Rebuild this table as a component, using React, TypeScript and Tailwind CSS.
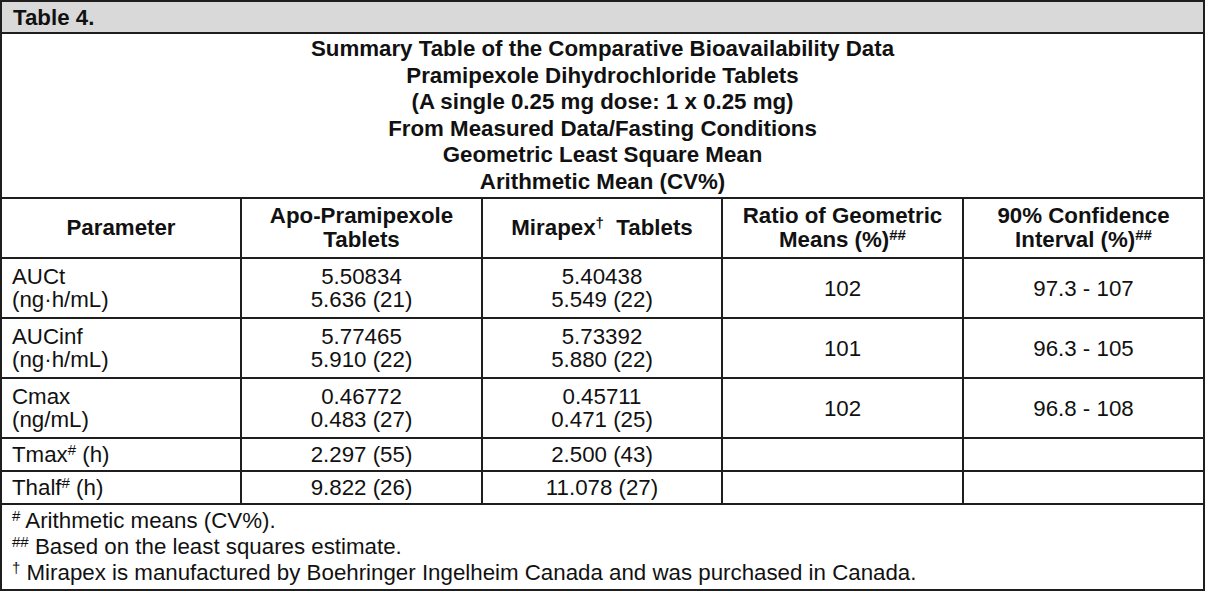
import React from "react";

const cols = "grid grid-cols-[240px_241px_240px_241px_1fr]";
const cell = "border-r-2 border-[#1e1e1e] flex flex-col justify-center";
const lastCell = "flex flex-col justify-center";

function Sup({ children }: { children: React.ReactNode }) {
  return <sup className="text-[15px] relative -top-[7px] align-baseline leading-none">{children}</sup>;
}

type Row = {
  p: React.ReactNode[];
  a: string[];
  m: string[];
  r: string;
  c: string;
  h: string;
};

const rows: Row[] = [
  { p: ["AUCt", "(ng·h/mL)"], a: ["5.50834", "5.636 (21)"], m: ["5.40438", "5.549 (22)"], r: "102", c: "97.3 - 107", h: "h-[58px]" },
  { p: ["AUCinf", "(ng·h/mL)"], a: ["5.77465", "5.910 (22)"], m: ["5.73392", "5.880 (22)"], r: "101", c: "96.3 - 105", h: "h-[58px]" },
  { p: ["Cmax", "(ng/mL)"], a: ["0.46772", "0.483 (27)"], m: ["0.45711", "0.471 (25)"], r: "102", c: "96.8 - 108", h: "h-[58px]" },
  {
    p: [
      <span key="t">
        Tmax<Sup>#</Sup> (h)
      </span>,
    ],
    a: ["2.297 (55)"],
    m: ["2.500 (43)"],
    r: "",
    c: "",
    h: "h-[31px]",
  },
  {
    p: [
      <span key="t">
        Thalf<Sup>#</Sup> (h)
      </span>,
    ],
    a: ["9.822 (26)"],
    m: ["11.078 (27)"],
    r: "",
    c: "",
    h: "h-[31px]",
  },
];

export default function App() {
  return (
    <div
      className="w-[1205px] h-[591px] bg-white text-[#111] text-[22.3px] leading-[23px]"
      style={{ fontFamily: '"Liberation Sans", Arial, sans-serif' }}
    >
      <div className="border-2 border-[#1e1e1e] flex flex-col">
        {/* Title */}
        <div className="h-[30px] bg-[#d9d9d9] border-b-2 border-[#1e1e1e] box-content flex items-center pl-[11px] font-bold">
          Table 4.
        </div>
        {/* Summary */}
        <div className="h-[163px] box-content border-b-2 border-[#1e1e1e] flex flex-col items-center justify-center font-bold leading-[26.5px]">
          <div>Summary Table of the Comparative Bioavailability Data</div>
          <div>Pramipexole Dihydrochloride Tablets</div>
          <div>(A single 0.25 mg dose: 1 x 0.25 mg)</div>
          <div>From Measured Data/Fasting Conditions</div>
          <div>Geometric Least Square Mean</div>
          <div>Arithmetic Mean (CV%)</div>
        </div>
        {/* Header */}
        <div className={`${cols} h-[58px] box-content border-b-2 border-[#1e1e1e] font-bold text-center leading-[24px]`}>
          <div className={cell}>Parameter</div>
          <div className={cell}>
            <div>Apo-Pramipexole</div>
            <div>Tablets</div>
          </div>
          <div className={cell}>
            <div>
              Mirapex<Sup>†</Sup>&nbsp; Tablets
            </div>
          </div>
          <div className={cell}>
            <div>Ratio of Geometric</div>
            <div>
              Means (%)<Sup>##</Sup>
            </div>
          </div>
          <div className={lastCell}>
            <div>90% Confidence</div>
            <div>
              Interval (%)<Sup>##</Sup>
            </div>
          </div>
        </div>
        {/* Data rows */}
        {rows.map((r, i) => (
          <div key={i} className={`${cols} ${r.h} box-content border-b-2 border-[#1e1e1e]`}>
            <div className={`${cell} pl-[10px]`}>
              {r.p.map((t, j) => (
                <div key={j}>{t}</div>
              ))}
            </div>
            <div className={`${cell} items-center`}>
              {r.a.map((t, j) => (
                <div key={j}>{t}</div>
              ))}
            </div>
            <div className={`${cell} items-center`}>
              {r.m.map((t, j) => (
                <div key={j}>{t}</div>
              ))}
            </div>
            <div className={`${cell} items-center`}>{r.r}</div>
            <div className={`${lastCell} items-center`}>{r.c}</div>
          </div>
        ))}
        {/* Footnotes */}
        <div className="h-[84px] flex flex-col justify-center pl-[10px] leading-[26px]">
          <div>
            <Sup>#</Sup> Arithmetic means (CV%).
          </div>
          <div>
            <Sup>##</Sup> Based on the least squares estimate.
          </div>
          <div>
            <Sup>†</Sup> Mirapex is manufactured by Boehringer Ingelheim Canada and was purchased in Canada.
          </div>
        </div>
      </div>
    </div>
  );
}
